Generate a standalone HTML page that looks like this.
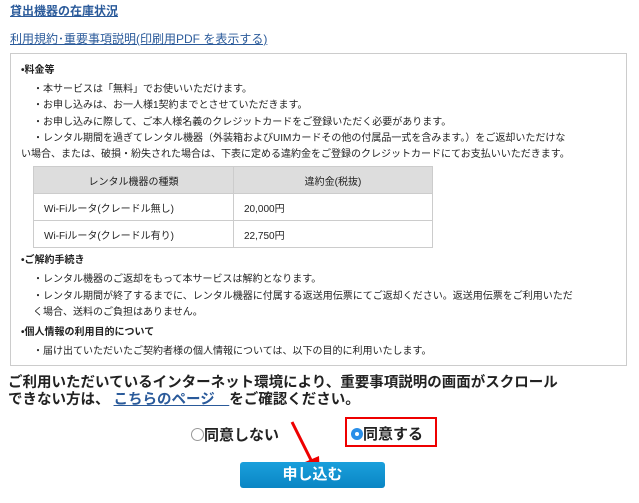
<!DOCTYPE html><html><head><meta charset="utf-8"><style>
body{margin:0;width:639px;height:503px;background:#fff;font-family:"Liberation Sans","Noto Sans CJK JP",sans-serif;color:#222;position:relative;overflow:hidden}
.a{position:absolute;white-space:nowrap}
.s{font-size:10px;line-height:13px}
a{color:#2a5a9a;text-decoration:underline}
.b{font-weight:bold}
table{position:absolute;left:33px;top:166px;border-collapse:collapse;font-size:10px}
td,th{border:1px solid #ccc;height:26px;padding:0 10px}
th{background:#ddd;font-weight:normal;text-align:center}
</style></head><body>
<div class="a b" style="left:10px;top:2px;font-size:12px;"><a>貸出機器の在庫状況</a></div>
<div class="a" style="left:10px;top:30px;font-size:12px;"><a>利用規約･重要事項説明(印刷用PDF を表示する)</a></div>
<div class="a" style="left:10px;top:53px;width:615px;height:311px;border:1px solid #ccc"></div>
<div class="a s b" style="left:21px;top:64px">•料金等</div>
<div class="a s" style="left:33px;top:83px">・本サービスは「無料」でお使いいただけます。</div>
<div class="a s" style="left:33px;top:99px">・お申し込みは、お一人様1契約までとさせていただきます。</div>
<div class="a s" style="left:33px;top:116px">・お申し込みに際して、ご本人様名義のクレジットカードをご登録いただく必要があります。</div>
<div class="a s" style="left:33px;top:132px">・レンタル期間を過ぎてレンタル機器（外装箱およびUIMカードその他の付属品一式を含みます。）をご返却いただけな</div>
<div class="a s" style="left:21px;top:148px">い場合、または、破損・紛失された場合は、下表に定める違約金をご登録のクレジットカードにてお支払いいただきます。</div>
<table><tr><th style="width:179px">レンタル機器の種類</th><th style="width:178px">違約金(税抜)</th></tr>
<tr><td>Wi-Fiルータ(クレードル無し)</td><td>20,000円</td></tr>
<tr><td>Wi-Fiルータ(クレードル有り)</td><td>22,750円</td></tr></table>
<div class="a s b" style="left:21px;top:254px">•ご解約手続き</div>
<div class="a s" style="left:33px;top:273px">・レンタル機器のご返却をもって本サービスは解約となります。</div>
<div class="a s" style="left:33px;top:290px">・レンタル期間が終了するまでに、レンタル機器に付属する返送用伝票にてご返却ください。返送用伝票をご利用いただ</div>
<div class="a s" style="left:33px;top:306px">く場合、送料のご負担はありません。</div>
<div class="a s b" style="left:21px;top:326px">•個人情報の利用目的について</div>
<div class="a s" style="left:33px;top:345px">・届け出ていただいたご契約者様の個人情報については、以下の目的に利用いたします。</div>
<div class="a b" style="left:8px;top:375px;font-size:14.5px;line-height:17px">ご利用いただいているインターネット環境により、重要事項説明の画面がスクロール<br>できない方は、 <a>こちらのページ　</a>をご確認ください。</div>
<div class="a b" style="left:191px;top:424px;font-size:15px;"><span style="display:inline-block;width:11px;height:11px;border:1px solid #999;border-radius:50%;vertical-align:-1px"></span>同意しない</div>
<div class="a" style="left:345px;top:417px;width:92px;height:30px;border:2px solid #e00;box-sizing:border-box"></div>
<div class="a b" style="left:351px;top:423px;font-size:15px;"><span style="display:inline-block;width:12px;height:12px;background:#2a8fe8;border-radius:50%;vertical-align:-1px;position:relative"><span style="position:absolute;left:4px;top:4px;width:4px;height:4px;background:#fff;border-radius:50%"></span></span>同意する</div>
<svg class="a" style="left:285px;top:418px" width="45" height="62"><line x1="7" y1="4" x2="28" y2="46" stroke="#e00" stroke-width="3"/><polygon points="35,58 20,44 34,38" fill="#e00"/></svg>
<div class="a b" style="left:240px;top:462px;width:145px;height:26px;border-radius:3px;background:linear-gradient(#1aa0dc,#0a86c4);color:#fff;font-size:15px;text-align:center;line-height:26px">申し込む</div>
</body></html>
